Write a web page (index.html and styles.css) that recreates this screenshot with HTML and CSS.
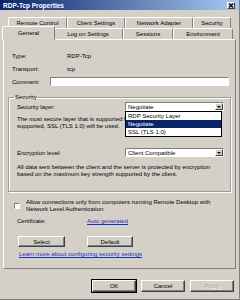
FILE: index.html
```html
<!DOCTYPE html>
<html lang="en">
<head>
  <meta charset="UTF-8" />
  <meta name="viewport" content="width=device-width, initial-scale=1" />
  <title>RDP-Tcp Properties</title>
  <link rel="stylesheet" href="styles.css">
</head>
<body>
  <div class="dialog">
    <div class="titlebar">
      <span class="title">RDP-Tcp Properties</span>
      <span class="close-btn">
        <svg width="6" height="5" viewBox="0 0 6 5"><path d="M1 0.5 L5 4.5 M5 0.5 L1 4.5" stroke="#000" stroke-width="1.1" fill="none"/></svg>
      </span>
    </div>

    <div class="tabs">
      <div class="tab-row back-row">
        <div class="tab">Remote Control</div>
        <div class="tab">Client Settings</div>
        <div class="tab">Network Adapter</div>
        <div class="tab">Security</div>
      </div>
      <div class="tab-row front-row">
        <div class="tab active">General</div>
        <div class="tab">Log on Settings</div>
        <div class="tab">Sessions</div>
        <div class="tab">Environment</div>
      </div>
    </div>

    <div class="panel">
      <div class="info-row"><span class="info-label">Type:</span><span>RDP-Tcp</span></div>
      <div class="info-row"><span class="info-label">Transport:</span><span>tcp</span></div>
      <div class="info-row"><span class="info-label comment-label">Comment:</span><input class="text-input" type="text"></div>

      <fieldset class="group">
        <legend>Security</legend>
        <div class="combo-row">
          <span>Security layer:</span>
          <div class="combo">
            <span class="combo-value">Negotiate</span>
            <span class="combo-arrow"></span>
            <ul class="combo-list">
              <li>RDP Security Layer</li>
              <li class="selected">Negotiate</li>
              <li>SSL (TLS 1.0)</li>
            </ul>
          </div>
        </div>
        <p class="note layer-note">The most secure layer that is supported by the client will be used. If<br>supported, SSL (TLS 1.0) will be used.</p>

        <div class="combo-row encryption-row">
          <span>Encryption level:</span>
          <div class="combo">
            <span class="combo-value">Client Compatible</span>
            <span class="combo-arrow"></span>
          </div>
        </div>
        <p class="note">All data sent between the client and the server is protected by encryption<br>based on the maximum key strength supported by the client.</p>
      </fieldset>

      <div class="check-row">
        <span class="checkbox"></span>
        <span>Allow connections only from computers running Remote Desktop with<br>Network Level Authentication</span>
      </div>

      <div class="cert-row">
        <span class="cert-label">Certificate:</span>
        <a class="link" href="#">Auto generated</a>
      </div>

      <div class="button-row">
        <button class="btn select-btn">Select</button>
        <button class="btn default-btn">Default</button>
      </div>

      <div class="link-row">
        <a class="link" href="#">Learn more about configuring security settings</a>
      </div>
    </div>

    <div class="footer">
      <button class="btn footer-btn ok-btn">OK</button>
      <button class="btn footer-btn">Cancel</button>
      <button class="btn footer-btn disabled">Apply</button>
    </div>
  </div>
</body>
</html>
```

FILE: styles.css
```css
* {
  box-sizing: border-box;
}

body {
  margin: 0;
  font-family: 'Liberation Sans', Arial, sans-serif;
  font-size: 6px;
  color: #000;
  background: #d4d0c8;
}

.dialog {
  width: 240px;
  height: 300px;
  background: #d4d0c8;
  border-right: 1px solid #808080;
  border-bottom: 1px solid #808080;
  overflow: hidden;
}

.titlebar {
  height: 10px;
  display: flex;
  align-items: center;
  justify-content: space-between;
  padding: 0 4px 0 3px;
  background: linear-gradient(to right, #0a246a, #a6caf0);
}

.title {
  color: #fff;
  font-weight: bold;
  font-size: 6.5px;
}

.close-btn {
  width: 8px;
  height: 7px;
  background: #d4d0c8;
  border: 1px solid;
  border-color: #fff #404040 #404040 #fff;
  display: flex;
  align-items: center;
  justify-content: center;
}

/* tabs */
.tabs {
  margin-top: 7px;
}

.tab-row {
  display: grid;
  height: 11px;
}

.back-row {
  grid-template-columns: 59px 58px 68px 38px;
  margin-left: 8px;
}

.front-row {
  grid-template-columns: 49px 70px 50px 60px;
  margin-left: 4px;
}

.tab {
  border: 1px solid;
  border-color: #fff #808080 transparent #fff;
  border-bottom: none;
  border-radius: 2px 2px 0 0;
  text-align: center;
  line-height: 10px;
  white-space: nowrap;
}

.tab.active {
  margin: -2px -2px -1px;
  background: #d4d0c8;
  line-height: 12px;
  position: relative;
  z-index: 1;
}

/* tab page */
.panel {
  margin: 0 3px;
  height: 230px;
  border: 1px solid;
  border-color: #fff #808080 #808080 #fff;
  padding: 9px 4px 0;
}

.info-row {
  display: flex;
  align-items: center;
  height: 13px;
  padding-left: 4px;
}

.info-label {
  width: 55px;
}

.comment-label {
  width: 67px;
}

.text-input {
  flex: 1;
  height: 9px;
  margin: 0 2px 0 0;
  padding: 0;
  background: #fff;
  border: 1px solid;
  border-color: #808080 #fff #fff #808080;
  outline: none;
}

.group {
  margin: 6px 0 0;
  padding: 1px 6px 13px 8px;
  border: 1px solid #a09c94;
  box-shadow: inset 1px 1px 0 #fff, 1px 1px 0 #fff;
}

.group legend {
  padding: 0 1px;
  margin-left: -3px;
  line-height: 7px;
}

.combo-row {
  display: flex;
  justify-content: space-between;
  align-items: center;
  height: 9px;
}

.encryption-row {
  margin-top: 18px;
}

.combo {
  width: 99px;
  height: 9px;
  position: relative;
  display: flex;
  align-items: center;
  padding-left: 2px;
  background: #fff;
  border: 1px solid;
  border-color: #808080 #fff #fff #808080;
}

.combo-value {
  flex: 1;
}

.combo-arrow {
  width: 8px;
  height: 7px;
  background: #d4d0c8;
  border: 1px solid;
  border-color: #fff #404040 #404040 #fff;
  display: flex;
  align-items: center;
  justify-content: center;
}

.combo-arrow::after {
  content: '';
  border-left: 2px solid transparent;
  border-right: 2px solid transparent;
  border-top: 2px solid #000;
}

.combo-list {
  position: absolute;
  top: 8px;
  left: -1px;
  width: 97px;
  margin: 0;
  padding: 0;
  list-style: none;
  background: #fff;
  border: 1px solid #000;
  z-index: 2;
}

.combo-list li {
  line-height: 8px;
  padding-left: 2px;
}

.combo-list .selected {
  background: #0a246a;
  color: #fff;
}

.note {
  margin: 5px 0 0;
  line-height: 7px;
  white-space: nowrap;
}

.group .note:last-child {
  margin-top: 7px;
}

.check-row {
  display: flex;
  align-items: center;
  gap: 6px;
  padding-left: 6px;
  margin-top: 7px;
  line-height: 7px;
  white-space: nowrap;
}

.checkbox {
  width: 6px;
  height: 6px;
  background: #fff;
  border: 1px solid;
  border-color: #808080 #fff #fff #808080;
}

.cert-row {
  display: flex;
  padding-left: 9px;
  margin-top: 5px;
  line-height: 7px;
}

.cert-label {
  width: 70px;
}

.link {
  color: #1c2fc4;
  text-decoration: underline;
}

.button-row {
  display: flex;
  gap: 22px;
  padding-left: 10px;
  margin-top: 11px;
}

.btn {
  height: 11px;
  padding: 0;
  font: inherit;
  color: #000;
  background: #d4d0c8;
  border: 1px solid;
  border-color: #fff #404040 #404040 #fff;
  box-shadow: inset -1px -1px 0 #808080;
}

.select-btn {
  width: 47px;
}

.default-btn {
  width: 46px;
}

.link-row {
  padding-left: 11px;
  margin-top: 4px;
  line-height: 7px;
}

.footer {
  display: flex;
  justify-content: flex-end;
  gap: 5px;
  padding-right: 5px;
  margin-top: 11px;
}

.footer-btn {
  width: 44px;
  height: 12px;
}

.ok-btn {
  outline: 1px solid #000;
}

.disabled {
  color: #a0a0a0;
  text-shadow: 1px 1px 0 #fff;
}
```
